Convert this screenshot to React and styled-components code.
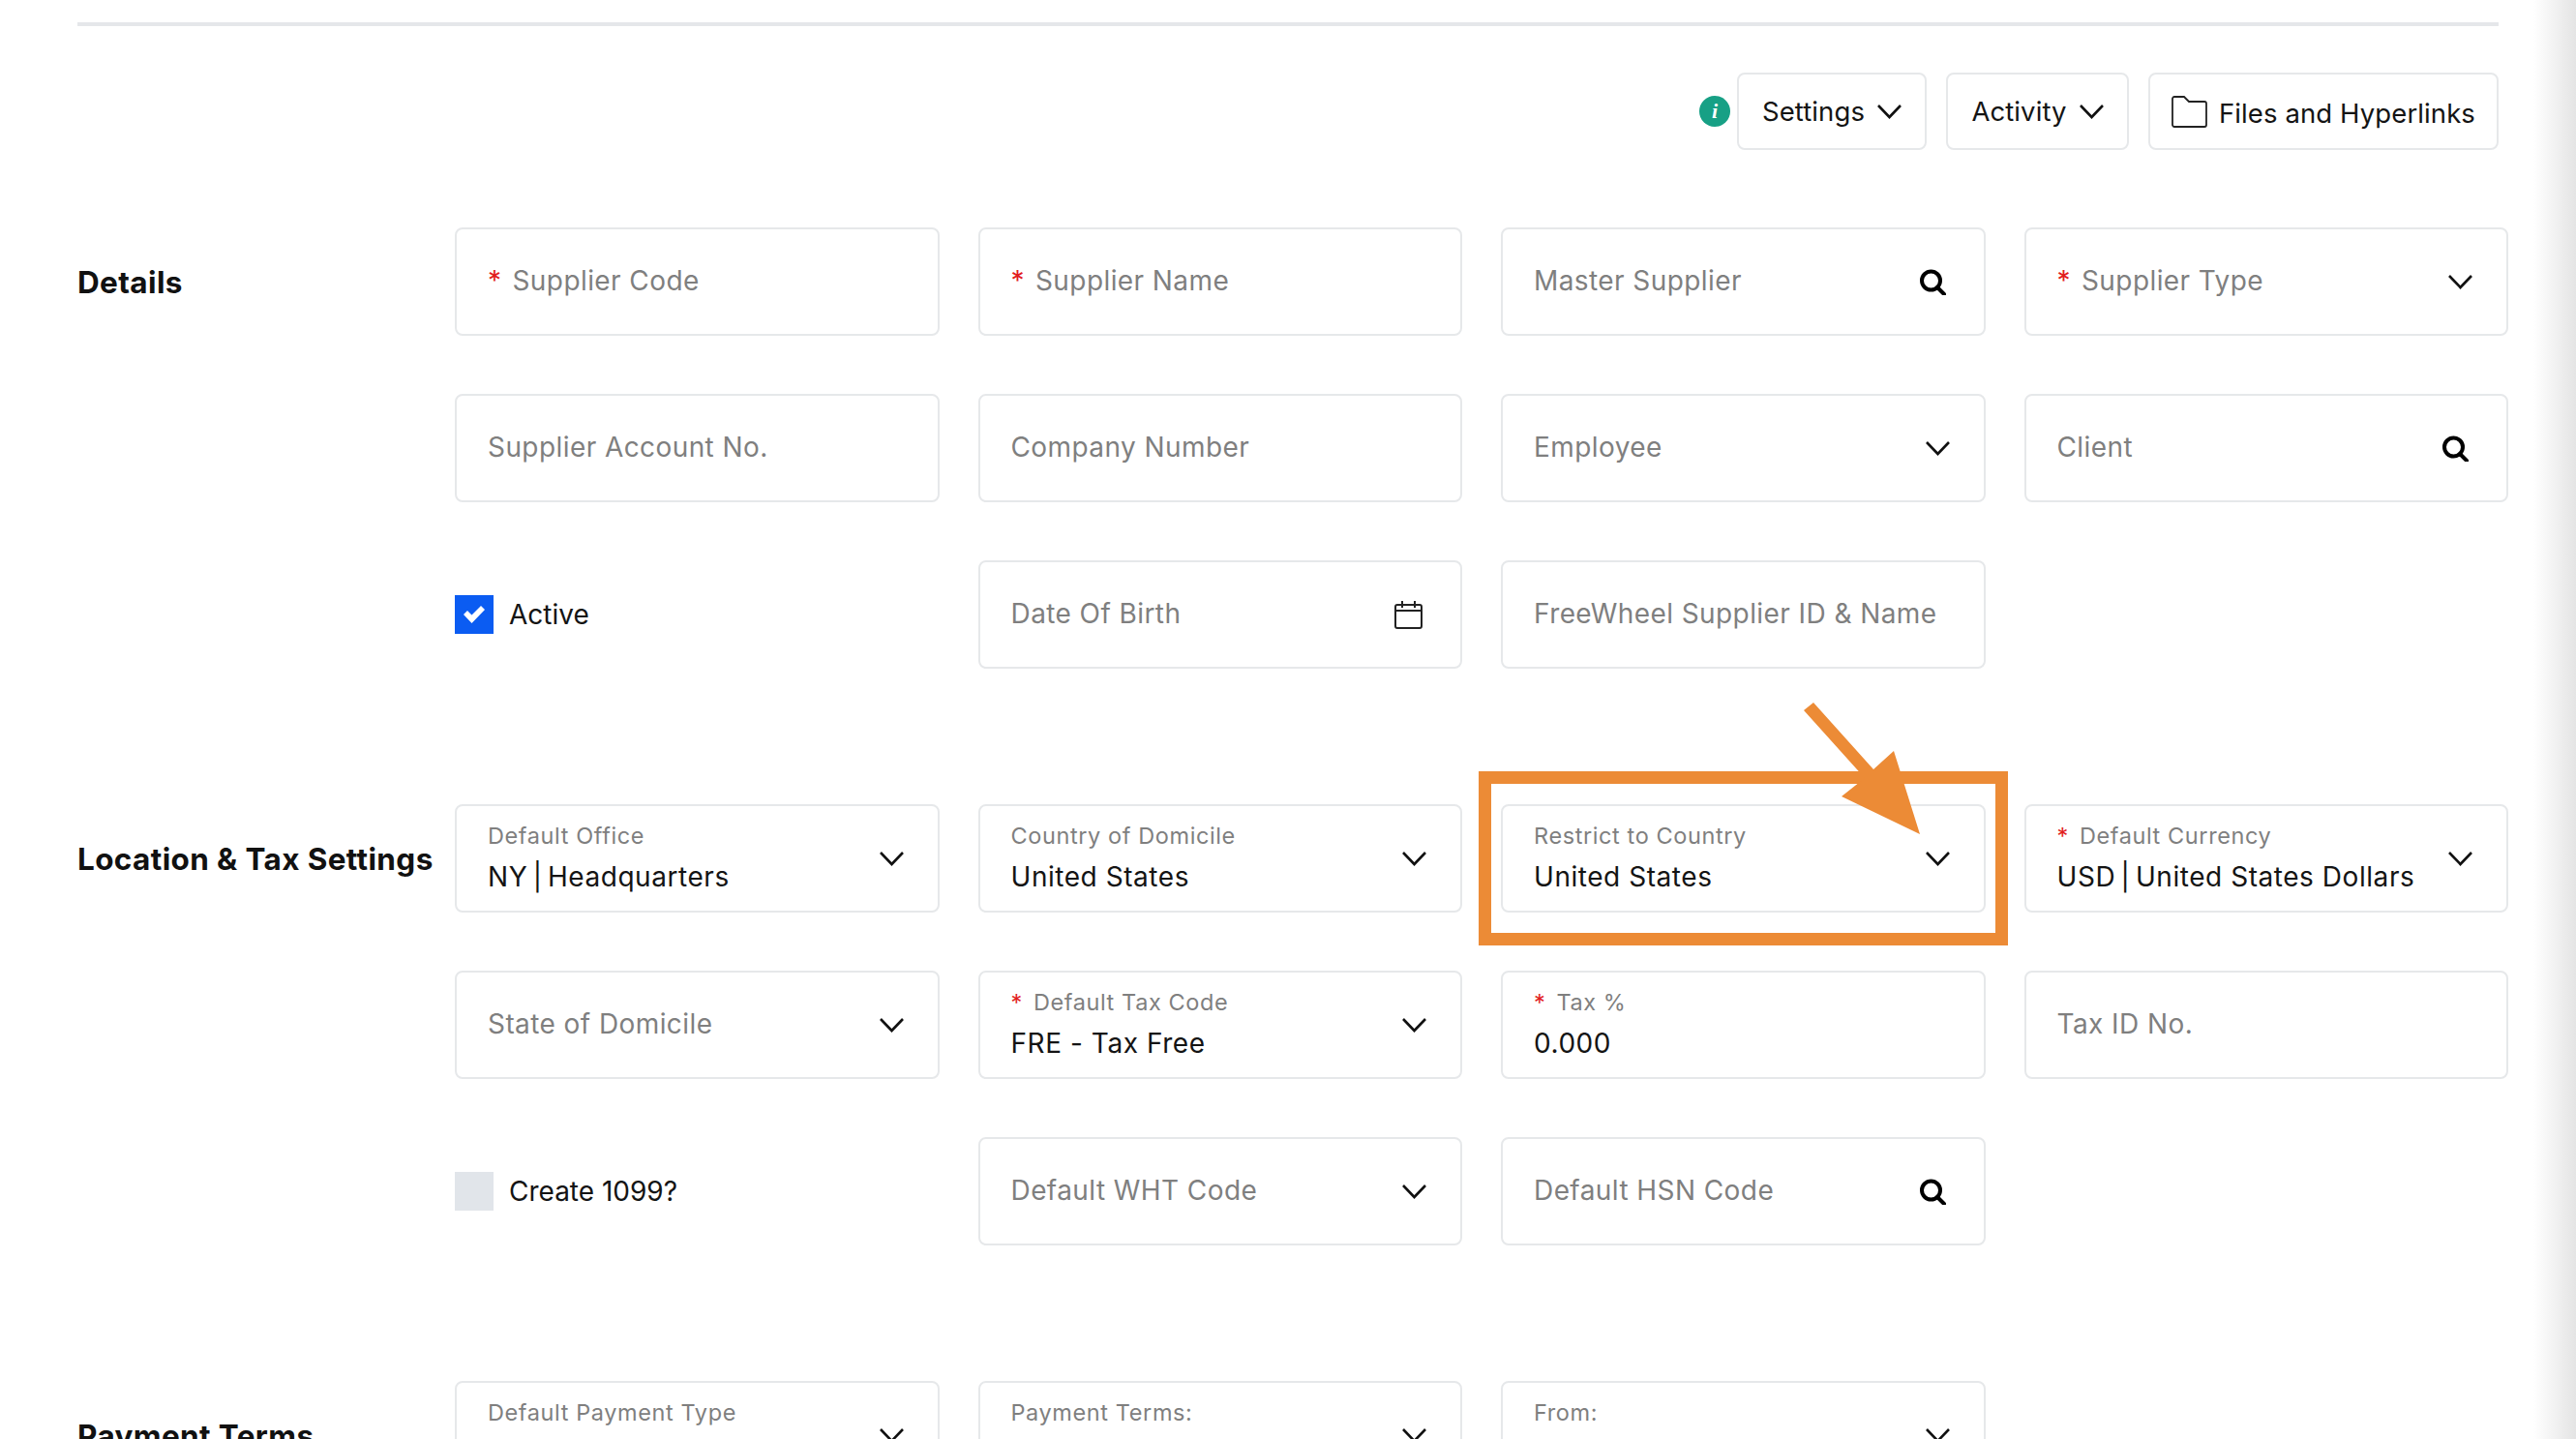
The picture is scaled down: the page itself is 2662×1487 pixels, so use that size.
import React from "react";
import styled, { createGlobalStyle } from "styled-components";

const Global = createGlobalStyle`
  html, body { margin: 0; padding: 0; background: #fff; overflow: hidden; }
  body { font-family: "Inter", "Liberation Sans", sans-serif; color: #141414; }
`;

const Viewport = styled.div`
  position: relative;
  width: 2662px;
  height: 1487px;
  overflow: hidden;
  background: #fff;
`;
const Content = styled.main`
  width: 2592px;
  padding: 23px 0 0 80px;
  box-sizing: border-box;
  display: flex;
  flex-direction: column;
`;
const Rule = styled.hr`
  width: 2502px;
  height: 4px;
  margin: 0;
  border: 0;
  background: #e5e7ea;
`;
const Toolbar = styled.div`
  width: 2502px;
  margin-top: 48px;
  display: flex;
  justify-content: flex-end;
  align-items: center;
  gap: 20px;
`;
const InfoGroup = styled.div`
  display: flex;
  align-items: center;
  gap: 7px;
`;
const InfoDot = styled.span`
  width: 32px;
  height: 32px;
  border-radius: 50%;
  background: #17a085;
  color: #fff;
  display: flex;
  align-items: center;
  justify-content: center;
  font: italic 700 22px "Liberation Serif", serif;
`;
const ToolButton = styled.div`
  height: 80px;
  box-sizing: border-box;
  width: ${(p) => p.$w}px;
  border: 2px solid #e6e8ea;
  border-radius: 8px;
  display: flex;
  align-items: center;
  justify-content: center;
  gap: ${(p) => p.$gap || 13}px;
  font-size: 27.5px;
  letter-spacing: 0.1px;
  color: #141414;
  white-space: nowrap;
`;
const FileLabel = styled.span`
  position: relative;
  top: 2px;
`;
const Section = styled.section`
  display: flex;
  margin-top: ${(p) => p.$top}px;
`;
const SectionTitle = styled.h2`
  width: 390px;
  flex: none;
  height: 112px;
  margin: 0;
  display: flex;
  align-items: center;
  font-size: 31.5px;
  font-weight: 700;
  letter-spacing: 0.37px;
  color: #111;
  white-space: nowrap;
`;
const FieldGrid = styled.div`
  display: grid;
  grid-template-columns: repeat(4, 500.5px);
  grid-auto-rows: 112px;
  column-gap: 40px;
  row-gap: 60px;
`;
const Field = styled.div`
  position: relative;
  box-sizing: border-box;
  border: 2px solid #e6e8ea;
  border-radius: 8px;
  padding: 0 35px 0 32px;
  display: flex;
  align-items: center;
  justify-content: space-between;
  background: #fff;
`;
const Placeholder = styled.span`
  font-size: 28px;
  letter-spacing: 0.42px;
  margin-bottom: 2px;
  color: #7f7f7f;
  white-space: nowrap;
`;
const Stack = styled.div`
  display: flex;
  flex-direction: column;
  gap: 9px;
  margin-bottom: 2px;
  white-space: nowrap;
`;
const SmallLabel = styled.span`
  font-size: 23.5px;
  line-height: 30px;
  letter-spacing: 0.6px;
  color: #7f7f7f;
`;
const Value = styled.span`
  font-size: 28px;
  line-height: 36px;
  letter-spacing: 0.55px;
  color: #141414;
`;
const Pipe = styled.span`
  margin: 0 -3px;
`;
const Star = styled.span`
  color: #e21d1d;
  margin-right: 11px;
`;
const IconInset = styled.span`
  display: flex;
  margin-right: 4px;
`;
const CheckCell = styled.div`
  display: flex;
  align-items: center;
  gap: 16px;
  font-size: 28px;
  color: #141414;
`;
const CheckBox = styled.span`
  width: 40px;
  height: 40px;
  display: flex;
  align-items: center;
  justify-content: center;
  background: ${(p) => (p.$on ? "#0b5cf2" : "#e1e5ea")};
`;
const Highlight = styled.div`
  position: absolute;
  left: -25px;
  right: -25px;
  top: -36px;
  bottom: -36px;
  border: 13px solid #ec8b36;
  pointer-events: none;
`;
const ArrowOverlay = styled.svg`
  position: absolute;
  left: 300px;
  top: -110px;
  width: 140px;
  height: 150px;
  pointer-events: none;
`;
const SideShade = styled.div`
  position: absolute;
  top: 0;
  right: 0;
  bottom: 0;
  width: 44px;
  background: linear-gradient(to right, #ffffff, #e4e4e4);
`;

const Chevron = () => (
  <svg width="25" height="15" viewBox="0 0 25 15" fill="none" stroke="#111" strokeWidth="2.6">
    <path d="M1 1l11.5 12L24 1" />
  </svg>
);
const Search = () => (
  <IconInset>
    <svg width="28" height="27" viewBox="0 0 28 27" fill="none" stroke="#000" strokeWidth="4">
      <circle cx="12.5" cy="12" r="9.500" />
      <path d="M19 19l7 7" strokeLinecap="round" />
    </svg>
  </IconInset>
);
const Calendar = () => (
  <IconInset>
    <svg width="29" height="29" viewBox="0 0 29 29" fill="none" stroke="#222" strokeWidth="2">
      <rect x="1" y="4" width="27" height="24" rx="2" />
      <path d="M1 10h27M8 0v7M21 0v7" />
    </svg>
  </IconInset>
);
const Folder = () => (
  <svg width="37" height="33" viewBox="0 0 37 33" fill="none" stroke="#222" strokeWidth="1.8">
    <path d="M1 30V3a2 2 0 0 1 2-2h10l5 5h16a2 2 0 0 1 2 2v22a2 2 0 0 1-2 2H3a2 2 0 0 1-2-2z" />
  </svg>
);
const Tick = () => (
  <svg width="24" height="20" viewBox="0 0 24 20" fill="#fff">
    <path d="M1 10l4-4 4.500 4.500L19 1l4 4L9.500 19z" />
  </svg>
);

const icons = { chevron: <Chevron />, search: <Search />, calendar: <Calendar /> };

const renderValue = (value) => {
  if (!value) return "\u00a0";
  const parts = value.split(" | ");
  if (parts.length === 1) return value;
  return (
    <>
      {parts[0]} <Pipe>|</Pipe> {parts[1]}
    </>
  );
};

const Input = ({ text, req, label, value, icon, children }) => (
  <Field>
    {label ? (
      <Stack>
        <SmallLabel>
          {req && <Star>*</Star>}
          {label}
        </SmallLabel>
        <Value>{renderValue(value)}</Value>
      </Stack>
    ) : (
      <Placeholder>
        {req && <Star>*</Star>}
        {text}
      </Placeholder>
    )}
    {icon && icons[icon]}
    {children}
  </Field>
);

const Check = ({ on, text }) => (
  <CheckCell>
    <CheckBox $on={on}>{on && <Tick />}</CheckBox>
    {text}
  </CheckCell>
);

export default function App() {
  return (
    <Viewport>
      <Global />
      <Content>
        <Rule />
        <Toolbar>
          <InfoGroup>
            <InfoDot>i</InfoDot>
            <ToolButton $w={196}>
              Settings <Chevron />
            </ToolButton>
          </InfoGroup>
          <ToolButton $w={189}>
            Activity <Chevron />
          </ToolButton>
          <ToolButton $w={362} $gap={12}>
            <Folder />
            <FileLabel>Files and Hyperlinks</FileLabel>
          </ToolButton>
        </Toolbar>

        <Section $top={80}>
          <SectionTitle>Details</SectionTitle>
          <FieldGrid>
            <Input req text="Supplier Code" />
            <Input req text="Supplier Name" />
            <Input text="Master Supplier" icon="search" />
            <Input req text="Supplier Type" icon="chevron" />
            <Input text="Supplier Account No." />
            <Input text="Company Number" />
            <Input text="Employee" icon="chevron" />
            <Input text="Client" icon="search" />
            <Check on text="Active" />
            <Input text="Date Of Birth" icon="calendar" />
            <Input text="FreeWheel Supplier ID & Name" />
          </FieldGrid>
        </Section>

        <Section $top={140}>
          <SectionTitle>Location &amp; Tax Settings</SectionTitle>
          <FieldGrid>
            <Input label="Default Office" value="NY | Headquarters" icon="chevron" />
            <Input label="Country of Domicile" value="United States" icon="chevron" />
            <Input label="Restrict to Country" value="United States" icon="chevron">
              <Highlight />
              <ArrowOverlay viewBox="0 0 140 150">
                <path
                  fill="#ec8b36"
                  d="M11 11 L21 3 L83 72 L104 53 L131 139 L50 100 L74 81 Z"
                />
              </ArrowOverlay>
            </Input>
            <Input req label="Default Currency" value="USD | United States Dollars" icon="chevron" />
            <Input text="State of Domicile" icon="chevron" />
            <Input req label="Default Tax Code" value="FRE - Tax Free" icon="chevron" />
            <Input req label="Tax %" value="0.000" />
            <Input text="Tax ID No." />
            <Check text="Create 1099?" />
            <Input text="Default WHT Code" icon="chevron" />
            <Input text="Default HSN Code" icon="search" />
          </FieldGrid>
        </Section>

        <Section $top={140}>
          <SectionTitle>Payment Terms</SectionTitle>
          <FieldGrid>
            <Input label="Default Payment Type" icon="chevron" />
            <Input label="Payment Terms:" icon="chevron" />
            <Input label="From:" icon="chevron" />
          </FieldGrid>
        </Section>
      </Content>
      <SideShade />
    </Viewport>
  );
}
